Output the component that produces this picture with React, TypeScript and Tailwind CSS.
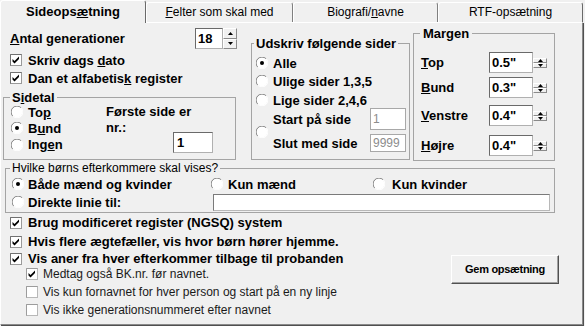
import React from 'react';

function Radio({ on = false, className = '' }: { on?: boolean; className?: string }) {
  return (
    <svg width="12" height="12" viewBox="0 0 12 12" className={`shrink-0 ${className}`}>
      <circle cx="6" cy="6" r="5.4" fill="#ffffff" />
      <path d="M10.2 1.8A5.9 5.9 0 0 0 1.8 10.2" fill="none" stroke="#808080" />
      <path d="M1.8 10.2A5.9 5.9 0 0 0 10.2 1.8" fill="none" stroke="#ffffff" />
      {on && <circle cx="6" cy="6" r="2" fill="#000000" />}
    </svg>
  );
}

function CheckBox({ on = true, faint = false }: { on?: boolean; faint?: boolean }) {
  return (
    <svg width="12" height="12" viewBox="0 0 12 12" className="shrink-0">
      <rect x="0.5" y="0.5" width="11" height="11" fill="#ffffff" stroke={faint ? '#b8b8b8' : '#9a9a9a'} />
      <path d="M0.5 11.5V0.5H11.5" fill="none" stroke={faint ? '#9c9c9c' : '#707070'} />
      {on && <path d="M2.5 5l2 2 4.5-4.5v2.5L4.5 9.5l-2-2z" fill="#000000" />}
    </svg>
  );
}

function Spin() {
  return (
    <div className="flex w-[14px] shrink-0 flex-col">
      <div className="flex flex-1 items-center justify-center border border-b-[#8a8a8a] border-l-white border-r-[#8a8a8a] border-t-white bg-[#f0f0f0]">
        <svg width="5" height="3" viewBox="0 0 5 3">
          <path d="M2.5 0L5 3H0z" fill="#000000" />
        </svg>
      </div>
      <div className="flex flex-1 items-center justify-center border border-b-[#8a8a8a] border-l-white border-r-[#8a8a8a] border-t-white bg-[#f0f0f0]">
        <svg width="5" height="3" viewBox="0 0 5 3">
          <path d="M0 0H5L2.5 3z" fill="#000000" />
        </svg>
      </div>
    </div>
  );
}

function Field({ className = '', dim = false, children }: { className?: string; dim?: boolean; children?: React.ReactNode }) {
  return (
    <div
      className={`flex shrink-0 items-center bg-white pl-[2px] leading-none ${
        dim
          ? 'border border-[#a8a8a8] text-[12px] font-normal text-[#8c8c8c]'
          : 'border border-b-[#b0b0b0] border-l-[#6a6a6a] border-r-[#b0b0b0] border-t-[#6a6a6a] text-[13px] font-bold'
      } ${className}`}
    >
      {children}
    </div>
  );
}

function MarginRow({ label, value, className }: { label: React.ReactNode; value: string; className: string }) {
  return (
    <div className={`flex h-[21px] items-center ${className}`}>
      <span className="w-[68px]">{label}</span>
      <Field className="h-[21px] w-[44px]">{value}</Field>
      <Spin />
    </div>
  );
}

export default function App() {
  return (
    <div className="h-[326px] w-[585px] overflow-hidden bg-[#f0f0f0] font-['Liberation_Sans',Arial,sans-serif] text-black">
      {/* tab strip */}
      <div className="flex h-[22px] items-end">
        <div className="relative z-10 -mb-px flex h-[23px] w-[146px] items-center justify-center rounded-t-[3px] border-l border-r border-t border-l-white border-r-[#6a6a6a] border-t-white bg-[#f0f0f0] pb-[1px] text-[13px] font-bold leading-none">
          <span>
            Sideops<u>æ</u>tning
          </span>
        </div>
        <div className="flex h-[20px] w-[147px] items-center justify-center rounded-t-[3px] border-l border-r border-t border-l-white border-r-[#808080] border-t-white pb-[1px] text-[12px] leading-none">
          <span>
            <u>F</u>elter som skal med
          </span>
        </div>
        <div className="flex h-[20px] w-[145px] items-center justify-center rounded-t-[3px] border-l border-r border-t border-l-white border-r-[#808080] border-t-white pb-[1px] text-[12px] leading-none">
          <span>
            Biografi/<u>n</u>avne
          </span>
        </div>
        <div className="flex h-[20px] w-[145px] items-center justify-center rounded-t-[3px] border-l border-r border-t border-l-white border-r-[#6a6a6a] border-t-white pb-[1px] text-[12px] leading-none">
          <span>RTF-opsætning</span>
        </div>
      </div>

      {/* panel */}
      <div className="h-[303px] w-[583px] border border-b-[#8a8a8a] border-l-white border-r-[#8a8a8a] border-t-white shadow-[1px_1px_0_#505050]">
        <div className="flex h-[138px] items-start">
          {/* left column */}
          <div className="ml-[2px] mt-[5px] w-[234px] text-[13px] font-bold leading-none">
            <div className="flex h-[21px] items-center justify-between pl-[7px]">
              <span>
                <u>A</u>ntal generationer
              </span>
              <div className="flex h-[21px]">
                <Field className="h-[21px] w-[28px]">18</Field>
                <Spin />
              </div>
            </div>
            <div className="mt-[2px] flex h-[18px] items-center gap-[6px] pl-[7px]">
              <CheckBox />
              <span>
                Skriv dags <u>d</u>ato
              </span>
            </div>
            <div className="flex h-[18px] items-center gap-[6px] pl-[7px]">
              <CheckBox />
              <span>
                Dan et alfabetis<u>k</u> register
              </span>
            </div>
            <fieldset className="mt-[4px] h-[69px] w-[233px] border border-[#a4a4a4]">
              <legend className="ml-[6px] px-[2px] leading-[13px]">
                S<u>i</u>detal
              </legend>
              <div className="flex">
                <div className="w-[102px] pl-[7px]">
                  <div className="flex h-[16px] items-center gap-[5px]">
                    <Radio />
                    <span>
                      To<u>p</u>
                    </span>
                  </div>
                  <div className="flex h-[16px] items-center gap-[5px]">
                    <Radio on />
                    <span>
                      B<u>u</u>nd
                    </span>
                  </div>
                  <div className="flex h-[17px] items-center gap-[5px]">
                    <Radio />
                    <span>
                      Ing<u>e</u>n
                    </span>
                  </div>
                </div>
                <div className="flex flex-col">
                  <span className="w-[95px] leading-[16px]">Første side er nr.:</span>
                  <Field className="-mt-[4px] ml-[67px] h-[21px] w-[40px] pl-[3px]">1</Field>
                </div>
              </div>
            </fieldset>
          </div>

          {/* Udskriv */}
          <fieldset className="ml-[14px] mt-[14px] h-[123px] w-[159px] border border-[#a4a4a4] text-[13px] font-bold leading-none">
            <legend className="ml-[2px] px-[2px] leading-[13px]">Udskriv følgende sider</legend>
            <div className="pl-[4px] pr-[3px] pt-[4px]">
              <div className="flex h-[18px] items-center gap-[5px]">
                <Radio on />
                <span>Alle</span>
              </div>
              <div className="flex h-[18px] items-center gap-[5px]">
                <Radio />
                <span>Ulige sider 1,3,5</span>
              </div>
              <div className="mt-[1px] flex h-[18px] items-center gap-[5px]">
                <Radio />
                <span>Lige sider 2,4,6</span>
              </div>
              <div className="-mt-px flex items-center gap-[5px]">
                <Radio className="mt-[3px]" />
                <div className="flex-1">
                  <div className="flex h-[22px] items-center justify-between">
                    <span>Start på side</span>
                    <Field dim className="h-[22px] w-[36px]">
                      1
                    </Field>
                  </div>
                  <div className="mt-[4px] flex h-[18px] items-center justify-between">
                    <span>Slut med side</span>
                    <Field dim className="h-[18px] w-[36px]">
                      9999
                    </Field>
                  </div>
                </div>
              </div>
            </div>
          </fieldset>

          {/* Margen */}
          <fieldset className="ml-[3px] mt-[4px] h-[134px] w-[142px] border border-[#a4a4a4] text-[13px] font-bold leading-none">
            <legend className="ml-[6px] px-[3px] leading-[13px]">Margen</legend>
            <div className="pl-[7px]">
              <MarginRow
                className="mt-[12px]"
                label={
                  <>
                    <u>T</u>op
                  </>
                }
                value={'0.5"'}
              />
              <MarginRow
                className="mt-[4px]"
                label={
                  <>
                    <u>B</u>und
                  </>
                }
                value={'0.3"'}
              />
              <MarginRow
                className="mt-[7px]"
                label={
                  <>
                    <u>V</u>enstre
                  </>
                }
                value={'0.4"'}
              />
              <MarginRow
                className="mt-[9px]"
                label={
                  <>
                    <u>H</u>øjre
                  </>
                }
                value={'0.4"'}
              />
            </div>
          </fieldset>
        </div>

        {/* Hvilke børns efterkommere */}
        <fieldset className="ml-[4px] h-[52px] w-[550px] border border-[#a4a4a4]">
          <legend className="ml-[4px] px-[2px] text-[12px] leading-[14px]">Hvilke børns efterkommere skal vises?</legend>
          <div className="text-[13px] font-bold leading-none">
            <div className="flex h-[18px] items-center pl-[6px]">
              <div className="flex w-[199px] items-center gap-[4px]">
                <Radio on />
                <span>Både mænd og kvinder</span>
              </div>
              <div className="flex w-[162px] items-center gap-[5px]">
                <Radio />
                <span>Kun mænd</span>
              </div>
              <div className="flex items-center gap-[7px]">
                <Radio />
                <span>Kun kvinder</span>
              </div>
            </div>
            <div className="flex h-[18px] items-center pl-[6px]">
              <div className="flex w-[201px] items-center gap-[4px]">
                <Radio />
                <span>Direkte linie til:</span>
              </div>
              <div className="h-[17px] w-[337px] border border-b-[#b8b8b8] border-l-[#7a7a7a] border-r-[#b8b8b8] border-t-[#7a7a7a] bg-white" />
            </div>
          </div>
        </fieldset>

        {/* options + button */}
        <div className="flex">
          <div className="w-[450px] text-[13px] font-bold leading-none">
            <div className="flex h-[19px] items-center gap-[6px] pl-[9px]">
              <CheckBox />
              <span>Brug modificeret register (NGSQ) system</span>
            </div>
            <div className="flex h-[19px] items-center gap-[6px] pl-[9px]">
              <CheckBox />
              <span>Hvis flere ægtefæller, vis hvor børn hører hjemme.</span>
            </div>
            <div className="flex h-[15px] items-center gap-[6px] pl-[9px]">
              <CheckBox />
              <span>Vis aner fra hver efterkommer tilbage til probanden</span>
            </div>
            <div className="flex h-[15px] items-center gap-[5px] pl-[25px] text-[12px] font-normal text-[#1a1a1a]">
              <CheckBox faint />
              <span>Medtag også BK.nr. før navnet.</span>
            </div>
            <div className="flex h-[21px] items-center gap-[5px] pl-[25px] text-[12px] font-normal text-[#1a1a1a]">
              <CheckBox faint on={false} />
              <span>Vis kun fornavnet for hver person og start på en ny linje</span>
            </div>
            <div className="flex h-[16px] items-center gap-[5px] pl-[25px] text-[12px] font-normal text-[#1a1a1a]">
              <CheckBox faint on={false} />
              <span>Vis ikke generationsnummeret efter navnet</span>
            </div>
          </div>
          <button className="mt-[42px] flex h-[29px] w-[108px] items-center justify-center border border-b-[#505050] border-l-white border-r-[#505050] border-t-white bg-[#f0f0f0] text-[11px] font-bold leading-none tracking-[-0.3px] shadow-[inset_-1px_-1px_0_#a0a0a0]">
            Gem opsætning
          </button>
        </div>
      </div>
    </div>
  );
}
